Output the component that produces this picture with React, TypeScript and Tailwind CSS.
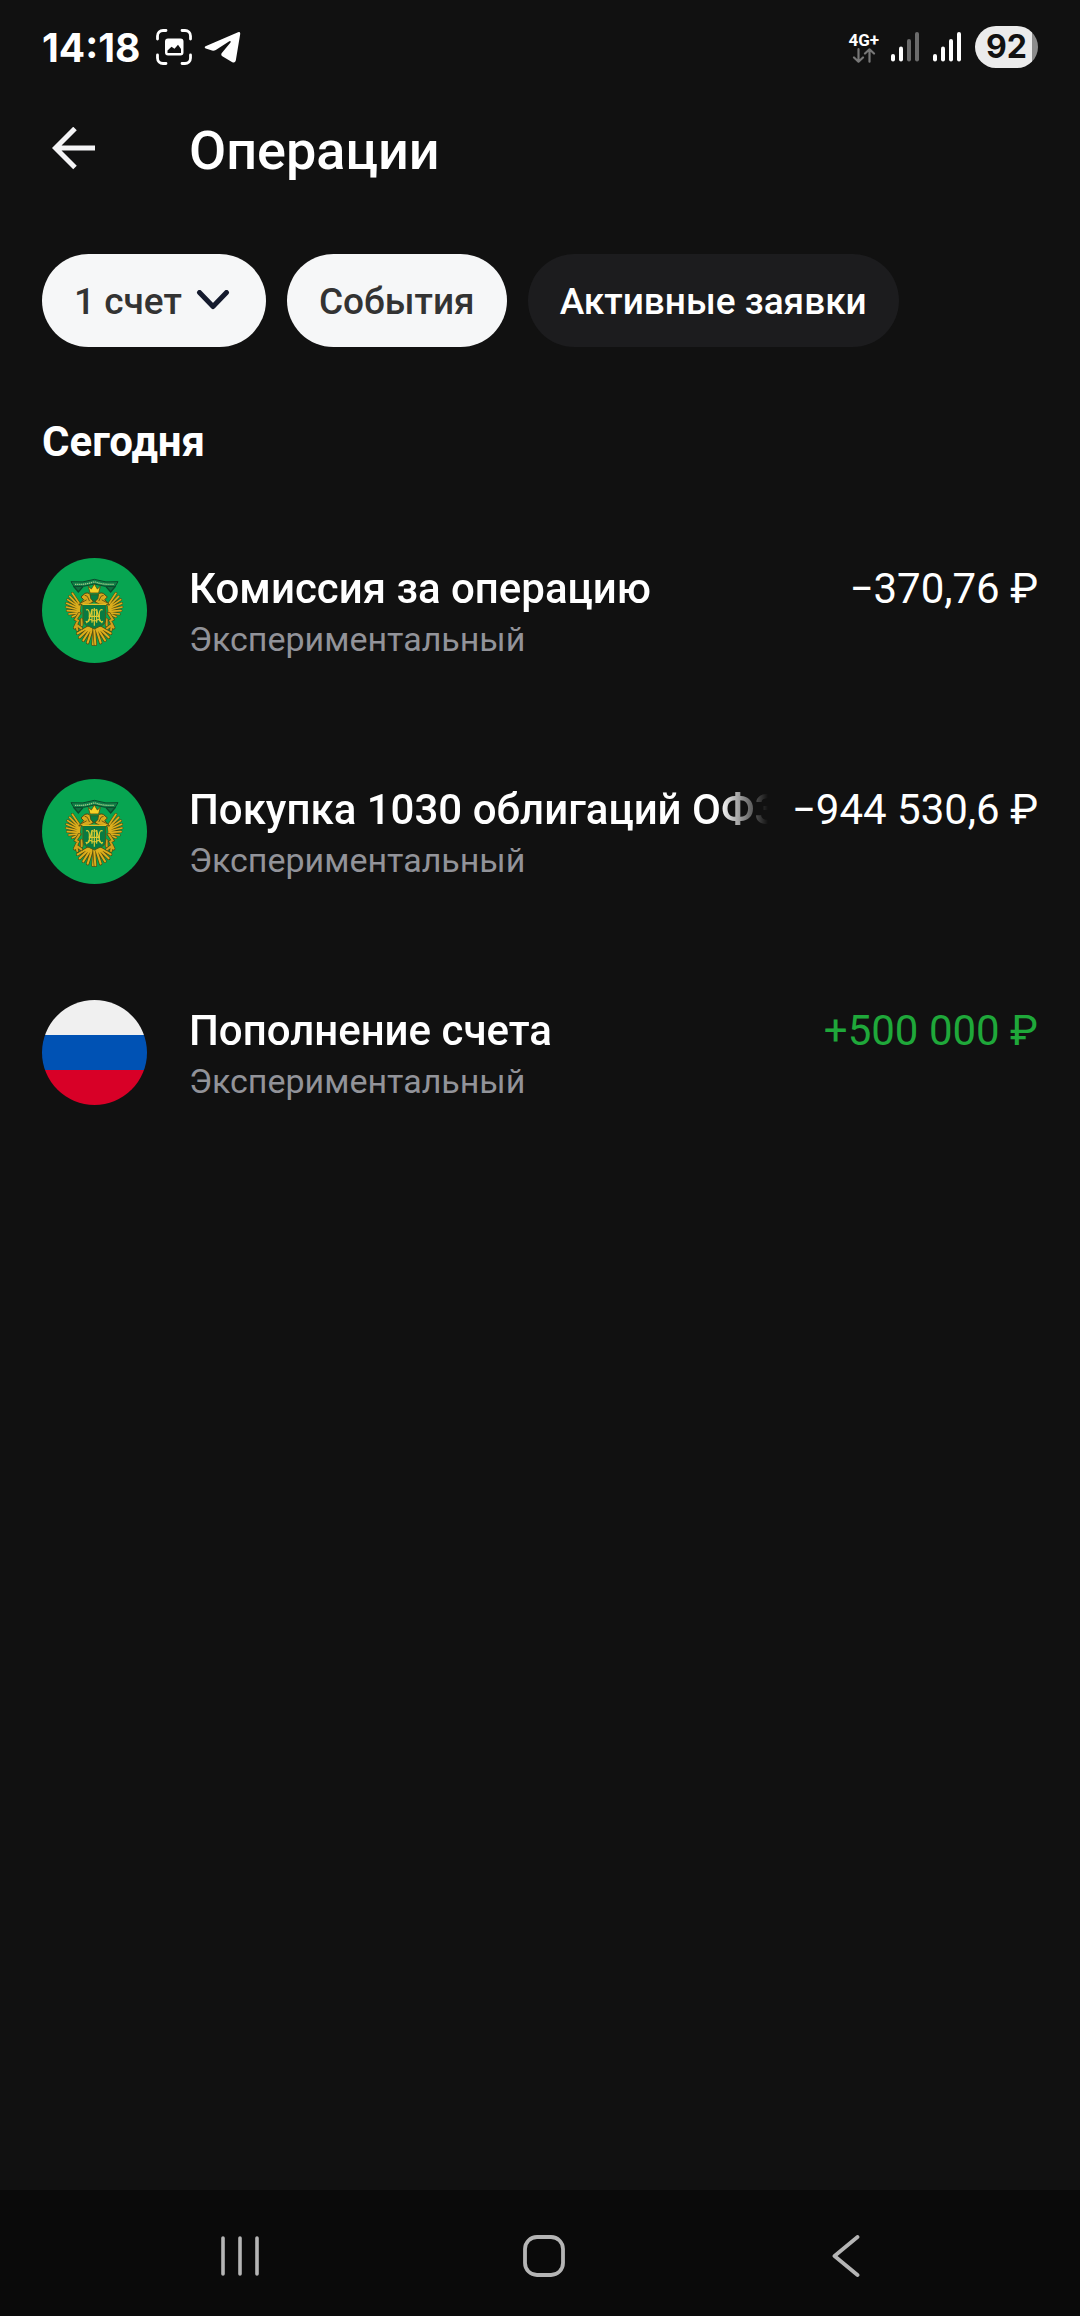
import React from "react";

type Operation = {
  title: string;
  account: string;
  amount: string;
  icon: "crest" | "flag";
  income?: boolean;
};

const operations: Operation[] = [
  { title: "Комиссия за операцию", account: "Экспериментальный", amount: "−370,76 ₽", icon: "crest" },
  { title: "Покупка 1030 облигаций ОФЗ", account: "Экспериментальный", amount: "−944 530,6 ₽", icon: "crest" },
  { title: "Пополнение счета", account: "Экспериментальный", amount: "+500 000 ₽", icon: "flag", income: true },
];

function ScreenshotIcon() {
  return (
    <svg width="36" height="36" viewBox="0 0 36 36" fill="none" aria-hidden="true">
      <path
        d="M1.5 10V7A5.5 5.5 0 0 1 7 1.500H10M26 1.500H29A5.500 5.500 0 0 1 34.500 7V10M34.500 26V29A5.500 5.500 0 0 1 29 34.500H26M10 34.500H7A5.500 5.500 0 0 1 1.500 29V26"
        stroke="#fff"
        strokeWidth="2.8"
        strokeLinecap="round"
      />
      <path
        fillRule="evenodd"
        fill="#fff"
        d="M12 9.500H24.500A3 3 0 0 1 27.500 12.500V23.500A3 3 0 0 1 24.500 26.500H12A3 3 0 0 1 9 23.500V12.500A3 3 0 0 1 12 9.500ZM11.500 21.500V24H25V20L22 15.800L18.500 19.800L15.500 17.800Z"
      />
    </svg>
  );
}

function TelegramIcon() {
  return (
    <svg width="37" height="33" viewBox="0 0 37 33" aria-hidden="true">
      <path
        d="M1.500 15.200L34 1.200Q36.500 .5 36.200 3L31.800 29.500Q31 32.500 28.300 31.200L18.300 25.300Q16.500 23.800 17.800 22L26.500 11.500Q27.200 9.600 25.300 10.300L11.800 19Q10 20 8 19.600L1.800 17.600Q-.2 16.500 1.500 15.200Z"
        fill="#fff"
      />
    </svg>
  );
}

function DataArrows() {
  return (
    <svg width="24" height="15" viewBox="0 0 24 15" fill="none" stroke="#777" strokeWidth="2.200" strokeLinecap="round" strokeLinejoin="round" aria-hidden="true">
      <path d="M6.500 1.200V13.500M2 9.500L6.500 13.700L11 9.500M17.500 13.700V1.500M13 5.500L17.500 1.300L22 5.500" />
    </svg>
  );
}

function Signal({ level }: { level: number }) {
  return (
    <svg width="28" height="30" viewBox="0 0 28 30" aria-hidden="true">
      {[22, 14.500, 7, 0].map((y, i) => (
        <rect key={y} x={i * 8} y={y} width="4" height={29.500 - y} rx="2" fill={i < level ? "#fff" : "#6b6b6b"} />
      ))}
    </svg>
  );
}

const wing =
  "M152 180L128 144M150 184L120 153M150 187L114 163M150 190L111 174M149 194L110 185M149 198L113 196M150 202L118 206M152 204L128 214";
const tail = "M194 246L190 297M188 248L174 292M184 248L161 285M180 247L150 276M177 245L144 264";

function CrestHalf() {
  return (
    <g fill="none" strokeLinecap="round">
      <path d={wing} stroke="#4f4a12" strokeWidth="8" />
      <path d={wing} stroke="#dcae1c" strokeWidth="5" />
      <path d={tail} stroke="#4f4a12" strokeWidth="10" />
      <path d={tail} stroke="#dcae1c" strokeWidth="6" />
      {/* leg */}
      <path d="M149 205L138 222L145 226L135 247M140 240L143 254M143 240L155 249M156 222V240" stroke="#4f4a12" strokeWidth="10" />
      <path d="M149 205L138 222L145 226L135 247M140 240L143 254M143 240L155 249M156 222V240" stroke="#d0a31c" strokeWidth="6" />
      {/* neck and head */}
      <path d="M148 178L162 163L154 155L166 144Q181 139 183 154L191 170L178 176Z" fill="#d8a91c" stroke="#4f4a12" strokeWidth="3" />
      <path d="M166 150L173 153L179 166M155 172L170 164" stroke="#6b5912" strokeWidth="3" />
    </g>
  );
}

function Crest() {
  return (
    <svg className="size-[105px] shrink-0" viewBox="37 38 315 315" aria-hidden="true">
      <circle cx="194.500" cy="195.500" r="157.500" fill="#07a551" />
      {/* ribbon */}
      <path d="M131 122L146 140L160 124M258 122L243 140L229 124" fill="#0f6f3f" stroke="#0b4a2c" strokeWidth="4" />
      <path d="M124 109Q160 114 194 102Q228 114 265 109L256 124Q228 126 194 116Q160 126 133 124Z" fill="#118048" stroke="#0b4a2c" strokeWidth="3" />
      <path d="M136 117Q168 119 194 109Q220 119 253 117" fill="none" stroke="#9cc987" strokeWidth="4" strokeDasharray="4 2" />
      <CrestHalf />
      <g transform="translate(387 0) scale(-1 1)">
        <CrestHalf />
      </g>
      {/* crown */}
      <path d="M176 123L185 131L194 116L203 131L212 123L207 143H181Z" fill="#f4d226" stroke="#5c4b0e" strokeWidth="2.500" />
      <path d="M182 148H206L205 160L194 169L183 160Z" fill="#087d43" stroke="#4f4a12" strokeWidth="2" />
      {/* shield with monogram */}
      <path d="M160 178H228V222Q228 240 208 244L194 251L180 244Q160 240 160 222Z" fill="#087a42" stroke="#4f5a16" strokeWidth="3" />
      <path d="M158 177H230" stroke="#e3bd22" strokeWidth="4" />
      <g fill="none" stroke="#dccb33" strokeWidth="3.500">
        <path d="M170 233Q180 226 187 191V232M218 233Q208 226 201 191V232M194 188V241M169 194Q178 190 179 204V224Q176 232 168 228M219 194Q210 190 209 204V224Q212 232 220 228M177 213H211M187 191Q194 200 201 191M181 222Q194 232 207 222" />
      </g>
    </svg>
  );
}

function Flag() {
  return (
    <div className="flex size-[105px] shrink-0 flex-col overflow-hidden rounded-full" aria-hidden="true">
      <div className="flex-1 bg-[#f0f0f0]" />
      <div className="flex-1 bg-[#0052b4]" />
      <div className="flex-1 bg-[#d80027]" />
    </div>
  );
}

function StatusBar() {
  return (
    <div className="flex h-[94px] items-center justify-between px-[42px] text-white">
      <div className="flex items-center">
        <span className="font-[Inter,sans-serif] text-[39px] leading-none font-bold">14:18</span>
        <span className="ml-4 flex items-center gap-3">
          <ScreenshotIcon />
          <TelegramIcon />
        </span>
      </div>
      <div className="flex items-center">
        <div className="flex flex-col items-center">
          <span className="font-[Roboto,sans-serif] text-[17px] leading-4 font-bold">4G+</span>
          <DataArrows />
        </div>
        <div className="ml-3 flex gap-[14px]">
          <Signal level={2} />
          <Signal level={4} />
        </div>
        <div className="ml-[14px] flex h-[42px] w-[63px] items-center justify-center rounded-full bg-linear-to-r from-[#ebebeb] from-91% to-[#8c8c8c] to-91%">
          <span className="font-[Inter,sans-serif] text-[32px] leading-none font-bold text-[#111]">92</span>
        </div>
      </div>
    </div>
  );
}

function OperationRow({ operation }: { operation: Operation }) {
  return (
    <li>
      <button type="button" className="flex h-[221px] w-full items-center px-[42px] text-left">
        {operation.icon === "crest" ? <Crest /> : <Flag />}
        <div className="ml-[42px] min-w-0 flex-1 pt-[3px]">
          <div className="flex items-center gap-6">
            <span className="min-w-0 flex-1 overflow-hidden mask-r-from-[calc(100%-48px)] text-[42px] leading-[54px] font-medium whitespace-nowrap text-white">
              {operation.title}
            </span>
            <span className={operation.income ? "text-[42px] leading-[54px] whitespace-nowrap text-[#1fa83a]" : "text-[42px] leading-[54px] whitespace-nowrap text-white"}>
              {operation.amount}
            </span>
          </div>
          <div className="text-[34px] leading-[46px] text-[#929399]">{operation.account}</div>
        </div>
      </button>
    </li>
  );
}

export default function App() {
  return (
    <div className="flex min-h-screen flex-col bg-[#111] font-[Roboto,sans-serif]">
      <StatusBar />
      <header className="flex h-[110px] items-center px-[42px]">
        <button type="button" aria-label="Назад" className="flex w-[147px] pl-[10px]">
          <svg width="44" height="44" viewBox="0 0 44 44" fill="none" stroke="#f4f4f6" strokeWidth="5" aria-hidden="true">
            <path d="M43 21H4M23 1.500L3.500 21L23 40.500" />
          </svg>
        </button>
        <h1 className="pt-1 text-[54px] leading-[64px] font-medium text-white">Операции</h1>
      </header>

      <div className="mt-[50px] flex gap-[21px] px-[42px] text-[37px] leading-[44px] font-medium">
        <button type="button" className="flex h-[93px] items-center gap-[14px] rounded-full bg-[#f6f7f8] pt-[3px] pr-9 pl-8 text-[#333]">
          1 счет
          <svg width="34" height="24" viewBox="0 0 34 24" fill="none" stroke="#151b2e" strokeWidth="5" strokeLinecap="round" strokeLinejoin="round" aria-hidden="true">
            <path d="M3.500 2.500L17 16.500L30.500 2.500" />
          </svg>
        </button>
        <button type="button" className="h-[93px] rounded-full bg-[#f6f7f8] px-8 pt-[3px] text-[#333]">События</button>
        <button type="button" className="h-[93px] rounded-full bg-[#1c1c1e] px-8 pt-[3px] text-white">Активные заявки</button>
      </div>

      <main className="flex-1">
        <h2 className="mt-[68px] px-[42px] text-[42px] leading-[54px] font-bold text-white">Сегодня</h2>
        <ul className="mt-[31px]">
          {operations.map((operation) => (
            <OperationRow key={operation.title} operation={operation} />
          ))}
        </ul>
      </main>

      <nav className="flex h-[126px] items-center justify-between bg-[#0a0a0a] pt-[6px] pr-[220px] pl-[219px]">
        <button type="button" aria-label="Недавние">
          <svg width="42" height="42" viewBox="0 0 42 42" stroke="#b5b5b5" strokeWidth="3.600" strokeLinecap="round" aria-hidden="true">
            <path d="M4 3V39M21 3V39M38 3V39" />
          </svg>
        </button>
        <button type="button" aria-label="Домой">
          <svg width="42" height="42" viewBox="0 0 42 42" fill="none" stroke="#b5b5b5" strokeWidth="3.800" aria-hidden="true">
            <rect x="2" y="2" width="38" height="38" rx="12" />
          </svg>
        </button>
        <button type="button" aria-label="Назад к приложению" className="flex w-[34px] justify-end">
          <svg width="28" height="42" viewBox="0 0 28 42" fill="none" stroke="#b5b5b5" strokeWidth="3.800" strokeLinecap="round" strokeLinejoin="round" aria-hidden="true">
            <path d="M25.500 2L2.500 21L25.500 40" />
          </svg>
        </button>
      </nav>
    </div>
  );
}
